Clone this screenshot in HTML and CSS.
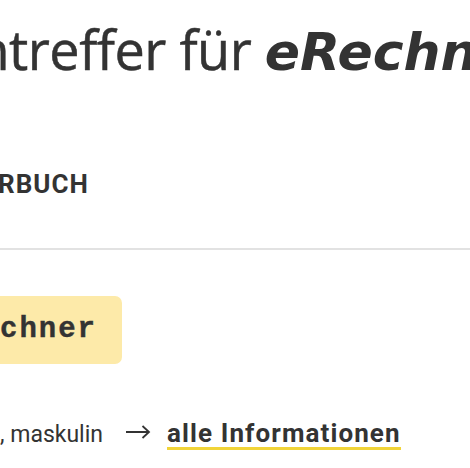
FILE: index.html
```html
<!DOCTYPE html>
<html lang="de">
<head>
    <meta charset="UTF-8">
    <meta name="viewport" content="width=device-width, initial-scale=1.0">
    <title>Suchergebnisse</title>
    <link rel="stylesheet" href="styles.css">
</head>
<body>
    <div class="results">
        <h1 class="results-title"><span class="cut">Duden</span>treffer für <em>eRechner</em></h1>
        <div class="section-label"><span class="cut">WÖRTE</span>RBUCH</div>
        <hr class="divider">
        <div class="entry">
            <div class="entry-word"><span class="cut">eRe</span>chner</div>
            <p class="entry-meta">
                <span><span class="cut">Substantiv</span>, maskulin</span>
                <svg class="arrow" width="26" height="17" viewBox="0 0 26 17" aria-hidden="true">
                    <path d="M1 7H24M17.5 1L24 7L17.5 13" fill="none" stroke="#333" stroke-width="1.8"/>
                </svg>
                <a href="#" class="entry-link">alle Informationen</a>
            </p>
        </div>
    </div>
</body>
</html>
```
FILE: styles.css
```css
html, body {
    margin: 0;
    overflow: hidden;
}
body {
    font-family: Roboto, "Liberation Sans", sans-serif;
    color: #333;
    background: #fff;
    width: 470px;
    height: 468px;
}
.cut {
    display: inline-flex;
    justify-content: flex-end;
    width: 0;
    white-space: nowrap;
}
.results {
    white-space: nowrap;
}
.results-title {
    font-family: "Open Sans", sans-serif;
    font-weight: 400;
    font-size: 54px;
    line-height: 65px;
    margin: 17px 0 0 9px;
    letter-spacing: -0.5px;
    -webkit-text-stroke: 0.5px #333;
}
.results-title em {
    font-family: "DejaVu Sans", sans-serif;
    font-size: 52px;
    font-weight: 700;
    font-style: italic;
    letter-spacing: 0;
    -webkit-text-stroke: 0;
}
.section-label {
    font-size: 26px;
    font-weight: 700;
    letter-spacing: 1px;
    line-height: 31px;
    margin: 84px 0 0 -2px;
}
.divider {
    border: none;
    border-top: 2px solid #e2e2e2;
    margin: 48px 0 0;
}
.entry {
    margin-top: 46px;
}
.entry-word {
    display: inline-block;
    font-family: "Liberation Mono", monospace;
    font-weight: 700;
    font-size: 29px;
    letter-spacing: 2px;
    line-height: 36px;
    padding: 16px 25px 16px 24px;
    margin-left: -24px;
    background: #fdeaa9;
    border-radius: 7px;
    -webkit-text-stroke: 0.4px #333;
}
.entry-meta {
    display: flex;
    align-items: baseline;
    font-size: 23px;
    line-height: 29px;
    margin: 55px 0 0;
}
.arrow {
    margin: 0 16px 0 22px;
}
.entry-link {
    color: #333;
    font-size: 26px;
    font-weight: 700;
    letter-spacing: 1.1px;
    text-decoration: none;
    border-bottom: 3px solid #f1d438;
    line-height: 28px;
}
```
